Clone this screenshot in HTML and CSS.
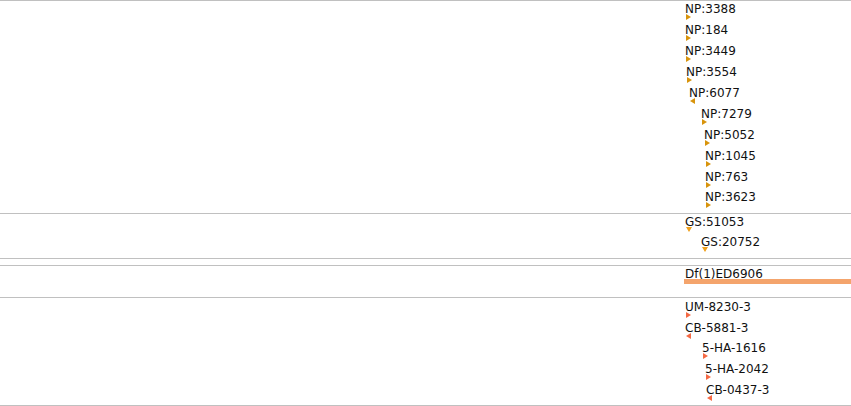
FILE: index.html
```html
<!DOCTYPE html>
<html>
<head>
    <title>Tracks</title>
    <link rel="stylesheet" href="styles.css">
</head>
<body>
    <div class="tracks">
        <!-- NP track -->
        <div class="track track-np">
            <div class="feat" style="left:685px; top:1px;"><span class="label">NP:3388</span><svg class="arrow gold" width="6" height="6"><polygon points="0,0 5,3 0,6"/></svg></div>
            <div class="feat" style="left:685px; top:22px;"><span class="label">NP:184</span><svg class="arrow gold" width="6" height="6"><polygon points="0,0 5,3 0,6"/></svg></div>
            <div class="feat" style="left:685px; top:43px;"><span class="label">NP:3449</span><svg class="arrow gold" width="6" height="6"><polygon points="0,0 5,3 0,6"/></svg></div>
            <div class="feat" style="left:686px; top:64px;"><span class="label">NP:3554</span><svg class="arrow gold" width="6" height="6"><polygon points="0,0 5,3 0,6"/></svg></div>
            <div class="feat" style="left:689px; top:85px;"><span class="label">NP:6077</span><svg class="arrow gold" width="6" height="6"><polygon points="5,0 0,3 5,6"/></svg></div>
            <div class="feat" style="left:701px; top:106px;"><span class="label">NP:7279</span><svg class="arrow gold" width="6" height="6"><polygon points="0,0 5,3 0,6"/></svg></div>
            <div class="feat" style="left:704px; top:127px;"><span class="label">NP:5052</span><svg class="arrow gold" width="6" height="6"><polygon points="0,0 5,3 0,6"/></svg></div>
            <div class="feat" style="left:705px; top:148px;"><span class="label">NP:1045</span><svg class="arrow gold" width="6" height="6"><polygon points="0,0 5,3 0,6"/></svg></div>
            <div class="feat" style="left:705px; top:169px;"><span class="label">NP:763</span><svg class="arrow gold" width="6" height="6"><polygon points="0,0 5,3 0,6"/></svg></div>
            <div class="feat" style="left:705px; top:189px;"><span class="label">NP:3623</span><svg class="arrow gold" width="6" height="6"><polygon points="0,0 5,3 0,6"/></svg></div>
        </div>

        <!-- GS track -->
        <div class="track track-gs">
            <div class="feat" style="left:685px; top:1px;"><span class="label">GS:51053</span><svg class="arrow amber" width="7" height="5"><polygon points="0,0 6,0 3,5"/></svg></div>
            <div class="feat" style="left:701px; top:21px;"><span class="label">GS:20752</span><svg class="arrow amber" width="7" height="5"><polygon points="0,0 6,0 3,5"/></svg></div>
        </div>

        <div class="track track-empty"></div>

        <!-- deficiency track -->
        <div class="track track-df">
            <div class="feat" style="left:685px; top:1px;"><span class="label">Df(1)ED6906</span></div>
            <div class="bar" style="left:684px; top:13px;"></div>
        </div>

        <!-- insertion track -->
        <div class="track track-ins">
            <div class="feat" style="left:685px; top:2px;"><span class="label">UM-8230-3</span><svg class="arrow red" width="6" height="6"><polygon points="0,0 5,3 0,6"/></svg></div>
            <div class="feat" style="left:685px; top:23px;"><span class="label">CB-5881-3</span><svg class="arrow red" width="6" height="6"><polygon points="5,0 0,3 5,6"/></svg></div>
            <div class="feat" style="left:702px; top:43px;"><span class="label">5-HA-1616</span><svg class="arrow red" width="6" height="6"><polygon points="0,0 5,3 0,6"/></svg></div>
            <div class="feat" style="left:705px; top:64px;"><span class="label">5-HA-2042</span><svg class="arrow red" width="6" height="6"><polygon points="0,0 5,3 0,6"/></svg></div>
            <div class="feat" style="left:706px; top:85px;"><span class="label">CB-0437-3</span><svg class="arrow red" width="6" height="6"><polygon points="5,0 0,3 5,6"/></svg></div>
        </div>
    </div>
</body>
</html>
```

FILE: styles.css
```css
body {
    margin: 0;
    background: #fff;
    font-family: "DejaVu Sans", sans-serif;
    font-size: 12px;
    color: #111;
}
.tracks {
    border-top: 1px solid #c0c0c0;
}
.track {
    position: relative;
    border-bottom: 1px solid #c0c0c0;
    overflow: hidden;
}
.track-np { height: 212px; }
.track-gs { height: 44px; }
.track-empty { height: 6px; }
.track-df { height: 31px; }
.track-ins { height: 107px; }
.feat {
    position: absolute;
    display: flex;
    flex-direction: column;
    align-items: flex-start;
    white-space: nowrap;
}
.label {
    display: block;
    line-height: 14px;
    height: 14px;
    margin-bottom: -2px;
}
.arrow {
    display: block;
    margin-left: 1px;
}
.gold { fill: #d8940c; }
.amber { fill: #f0a01c; }
.red { fill: #f56a44; }
.bar {
    position: absolute;
    right: 0;
    height: 5px;
    background: #f4a46c;
}
```
